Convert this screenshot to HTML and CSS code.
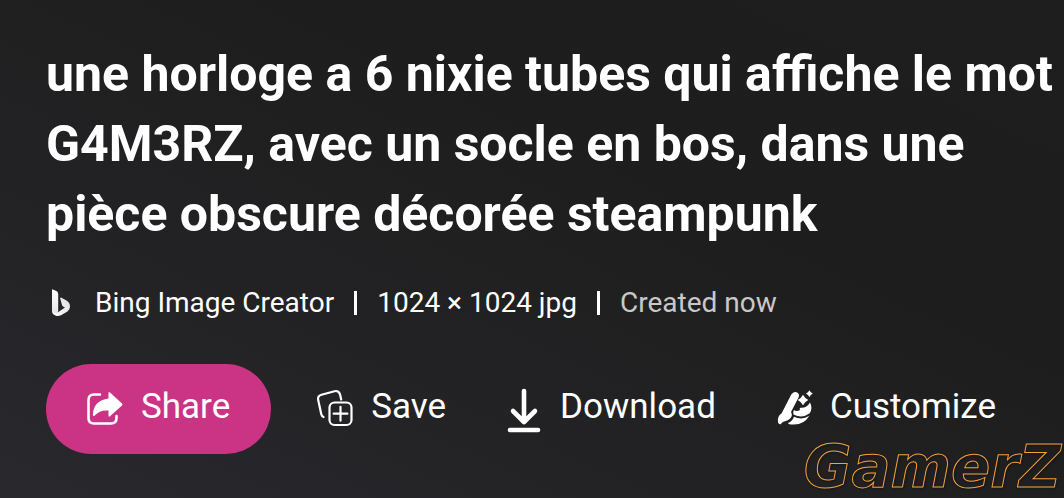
FILE: index.html
```html
<!DOCTYPE html>
<html lang="fr">
<head>
<meta charset="utf-8">
<meta name="viewport" content="width=device-width, initial-scale=1">
<title>Bing Image Creator</title>
<link rel="stylesheet" href="styles.css">
</head>
<body>
<main class="details">
  <h1 class="title">une horloge a 6 nixie tubes qui affiche le mot G4M3RZ, avec un socle en bos, dans une pièce obscure décorée steampunk</h1>
  <div class="meta">
    <svg class="meta-logo" viewBox="0 0 20 28" aria-hidden="true">
      <defs>
        <linearGradient id="stem" x1="0" y1="0" x2="0" y2="1"><stop offset="0" stop-color="#fff"/><stop offset="1" stop-color="#e6e6e6"/></linearGradient>
        <linearGradient id="bowl" x1="0" y1="1" x2="1" y2="0"><stop offset="0" stop-color="#fff"/><stop offset="1" stop-color="#ddd"/></linearGradient>
      </defs>
      <path fill="url(#bowl)" d="M9.200 9.500Q9 8 10.500 8.700L15.500 11.500Q19 13.500 19 17.500Q19 20.700 16.500 22.500L10 26.200C5.500 28.500 1 25.500 1 22L7 23.300L14 18.600L12 17.400Q11.300 17 11 16Z"/>
      <path fill="url(#stem)" d="M1 .8Q1 0 1.800 .4L5.500 2.100Q7.200 3 7.200 5V22.500C6 24 2.500 24.500 1 22.500Z"/>
    </svg>
    <span>Bing Image Creator</span>
    <span class="divider"></span>
    <span>1024 × 1024 jpg</span>
    <span class="divider"></span>
    <span class="muted">Created now</span>
  </div>
  <div class="actions">
    <button class="action primary" type="button">
      <svg class="icon" viewBox="0 0 40 40" aria-hidden="true">
        <path d="M16 5.500H10Q4.500 5.500 4.500 11V29Q4.500 34.500 10 34.500H27Q32.500 34.500 32.500 29V27" fill="none" stroke="#fff" stroke-width="2.600" stroke-linecap="round"/>
        <path d="M24.500 4.200Q24.500 2.300 26 3.600L38 14.400Q39 15.400 38 16.400L26 27.300Q24.500 28.500 24.500 26.600V21.500Q15.500 20.800 10.800 26.600Q9 28 8.800 25.500Q9.500 11.500 24.500 9.400Z" fill="#fff"/>
      </svg>
      Share
    </button>
    <button class="action" type="button">
      <svg class="icon" viewBox="0 2 40 40" fill="none" stroke="#fff" stroke-width="2.200" stroke-linecap="round" aria-hidden="true">
        <path d="M8.500 30Q6.800 29.300 6.300 27.200L3.200 13Q2.300 8.800 6.500 7.700L19.500 4.200Q23.700 3.200 25 7.300L26.200 12.500"/>
        <rect x="14.500" y="15.500" width="22" height="22.500" rx="5"/>
        <path d="M25.500 19.800V33.700M18.600 26.700H32.400"/>
      </svg>
      Save
    </button>
    <button class="action" type="button">
      <svg class="icon" viewBox="0 0 40 40" fill="none" stroke="#fff" stroke-width="4.600" stroke-linecap="round" stroke-linejoin="round" aria-hidden="true">
        <path d="M20 2V32M9 22L20 33L31 22"/>
        <path d="M6 41H34"/>
      </svg>
      Download
    </button>
    <button class="action" type="button">
      <svg class="icon" viewBox="0 2 40 40" fill="#fff" aria-hidden="true">
        <path d="M18.500 6.200Q21 4.200 23.500 5.700Q26 7.500 24.500 10.500L17 25Q19.500 29 15 32.500C11.500 35 8 34 7 37.200Q4 37.500 3.900 34C3.700 30.500 5 28 7.500 26.500L16.500 9Q17.300 7 18.500 6.200Z"/>
        <path d="M29 7.800Q30.800 11.200 34.300 13Q30.800 14.800 29 18.200Q27.200 14.800 23.700 13Q27.200 11.200 29 7.800ZM35.400 3.300Q36.500 5.500 38.800 6.600Q36.500 7.700 35.400 9.900Q34.300 7.700 32 6.600Q34.300 5.500 35.400 3.300Z"/>
        <path d="M36 15.500Q39 21 35.700 26.300Q28 32 19.500 27.500Q18.500 25 20 23Q22.500 25 26 23Q25 21 26.500 20.800Q32.500 21.500 36 15.500Z"/>
        <path d="M35.300 28.800Q30 38 19 37.600Q14.500 37.500 14 36C17 35 19 32.500 20 29.700Q28 33.500 35.300 28.800Z"/>
      </svg>
      Customize
    </button>
  </div>
</main>
<div class="watermark">GamerZ</div>
</body>
</html>
```
FILE: styles.css
```css
* { box-sizing: border-box; }

body {
  margin: 0;
  min-height: 100vh;
  background: linear-gradient(25deg, #29282d 0%, #222224 35%, #1d1d1d 65%, #1e1e1f 100%);
  color: #fff;
  font-family: Roboto, "Liberation Sans", sans-serif;
  overflow: hidden;
}

.details { padding: 39px 0 44px 46px; }

.title {
  margin: 0;
  font-size: 50px;
  font-weight: 700;
  line-height: 70px;
}

.meta {
  display: flex;
  align-items: center;
  margin-top: 34px;
  gap: 20px;
  font-size: 28px;
  line-height: 40px;
  white-space: nowrap;
}

.meta-logo {
  width: 20px;
  height: 28px;
  margin: 0 4px 0 5px;
}

.divider {
  width: 3px;
  height: 24px;
  background: #fff;
}

.muted { color: #c8c8c8; }

.actions {
  display: flex;
  align-items: center;
  margin-top: 41px;
  gap: 30px;
}

.action {
  display: flex;
  align-items: center;
  gap: 16px;
  height: 90px;
  padding: 0 14px 4px;
  border: 0;
  background: none;
  color: inherit;
  font-family: inherit;
  font-size: 35px;
  line-height: 44px;
  white-space: nowrap;
  cursor: pointer;
}

.primary {
  gap: 17px;
  padding: 0 41px 4px 38px;
  border-radius: 45px;
  background: #cb3484;
}

.icon {
  width: 40px;
  height: 40px;
  margin-top: 4px;
  overflow: visible;
}

.watermark {
  position: absolute;
  right: 3px;
  bottom: 0;
  color: transparent;
  font-family: "DejaVu Sans", sans-serif;
  font-size: 58px;
  font-style: italic;
  font-weight: 700;
  line-height: 62px;
  -webkit-text-stroke: 1px #f5a03a;
  filter: drop-shadow(1px 1px 1px #111);
  pointer-events: none;
}
```
